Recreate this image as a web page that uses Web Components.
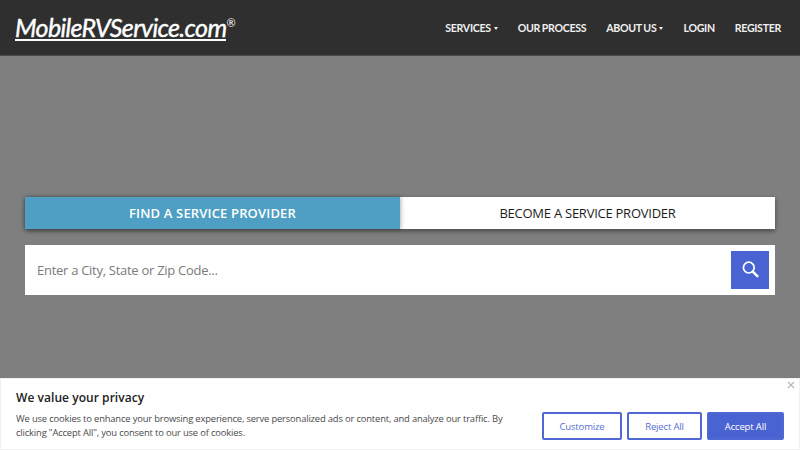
<!DOCTYPE html>
<html lang="en">
<head>
<meta charset="utf-8">
<title>MobileRVService.com</title>
<style>
  html, body { margin: 0; height: 100%; overflow: hidden; background: #7f7f7f; }
  body { font-family: "Open Sans", sans-serif; display: flex; flex-direction: column; }
</style>
</head>
<body>
<site-header></site-header>
<search-hero></search-hero>
<cookie-banner></cookie-banner>
<script>
class SiteHeader extends HTMLElement {
  constructor() {
    super();
    this.attachShadow({ mode: "open" });
    this.shadowRoot.innerHTML = `
      <style>
        :host {
          display: flex;
          flex: none;
          align-items: center;
          justify-content: space-between;
          height: 56px;
          box-sizing: border-box;
          padding: 0 19px 0 15px;
          background: #2f2f2f;
          border-bottom: 1px solid #4a4a4a;
          font-family: Lato, sans-serif;
          color: #fff;
        }
        .logo {
          display: flex;
          align-items: flex-start;
          font-size: 25px;
          font-style: italic;
          font-weight: 400;
          letter-spacing: -0.63px;
          -webkit-text-stroke: 0.4px #fff;
          line-height: 26px;
          margin-top: 1px;
        }
        .name { border-bottom: 2px solid #fff; line-height: 23px; }
        .mark { font-size: 11px; line-height: 12px; font-style: normal; letter-spacing: 0; -webkit-text-stroke: 0; margin-top: 1px; }
        nav { display: flex; gap: 20px; align-items: center; }
        a {
          font-size: 10.6px;
          font-weight: 700;
          letter-spacing: -0.3px;
          word-spacing: -0.5px;
          text-transform: uppercase;
          color: #f0f0f0;
          white-space: nowrap;
        }
        a.drop::after {
          content: "";
          display: inline-block;
          margin-left: 3px;
          vertical-align: 2px;
          border-top: 3px solid #f0f0f0;
          border-left: 2.5px solid transparent;
          border-right: 2.5px solid transparent;
        }
      </style>
      <div class="logo"><span class="name">MobileRVService.com</span><span class="mark">®</span></div>
      <nav>
        <a class="drop">Services</a>
        <a>Our Process</a>
        <a class="drop">About Us</a>
        <a>Login</a>
        <a>Register</a>
      </nav>
    `;
  }
}

class SearchHero extends HTMLElement {
  constructor() {
    super();
    this.attachShadow({ mode: "open" });
    this.shadowRoot.innerHTML = `
      <style>
        :host {
          display: block;
          flex: 1;
          padding: 141px 25px 0;
        }
        .tabs {
          display: grid;
          grid-template-columns: 375px 1fr;
          height: 32px;
          box-shadow: 0 2px 5px rgba(0, 0, 0, 0.45);
          margin-bottom: 16px;
        }
        .tab {
          display: flex;
          align-items: center;
          justify-content: center;
          font-size: 13px;
          font-weight: 400;
          letter-spacing: -0.25px;
          background: #fff;
          color: #1c1c1c;
        }
        .tab.active {
          background: #4e9fc3;
          color: #fff;
          font-weight: 600;
          letter-spacing: 0.16px;
          box-shadow: 1px 0 4px rgba(0, 0, 0, 0.3);
          position: relative;
        }
        .search {
          display: flex;
          align-items: center;
          justify-content: space-between;
          height: 50px;
          box-sizing: border-box;
          padding: 0 6px 0 12px;
          background: #fff;
        }
        .placeholder { font-size: 13px; letter-spacing: -0.28px; color: #7b7b7b; }
        .go {
          display: flex;
          align-items: center;
          justify-content: center;
          width: 38px;
          height: 38px;
          background: #4a63d2;
        }
      </style>
      <div class="tabs">
        <div class="tab active">FIND A SERVICE PROVIDER</div>
        <div class="tab">BECOME A SERVICE PROVIDER</div>
      </div>
      <div class="search">
        <span class="placeholder">Enter a City, State or Zip Code...</span>
        <div class="go">
          <svg width="18" height="18" viewBox="0 0 18 18" fill="none" stroke="#fff">
            <circle cx="7.8" cy="6.6" r="5.4" stroke-width="1.7"/>
            <path d="M11.8 10.6 L16.4 15.2" stroke-width="2.4" stroke-linecap="round"/>
          </svg>
        </div>
      </div>
    `;
  }
}

class CookieBanner extends HTMLElement {
  constructor() {
    super();
    this.attachShadow({ mode: "open" });
    this.shadowRoot.innerHTML = `
      <style>
        :host {
          display: block;
          position: fixed;
          left: 0;
          right: 0;
          bottom: 0;
          height: 72px;
          box-sizing: border-box;
          padding: 11px 15px 0;
          background: #fff;
          border: 1px solid #f0f0f0;
          color: #212121;
        }
        h2 {
          margin: 0 0 6px;
          font-size: 12px;
          line-height: 16px;
          font-weight: 600;
          letter-spacing: 0.05px;
        }
        .row { display: flex; justify-content: space-between; align-items: flex-start; }
        p {
          margin: 0;
          width: 502px;
          font-size: 9.4px;
          line-height: 13.5px;
          letter-spacing: -0.16px;
          color: #4a4a4a;
        }
        .actions { display: flex; gap: 5px; }
        button {
          height: 28px;
          box-sizing: border-box;
          padding: 0;
          font: 400 9.5px "Open Sans", sans-serif;
          letter-spacing: -0.15px;
          border: 2px solid #4f68d4;
          border-radius: 2px;
          background: #fff;
          color: #566ed6;
        }
        .customize { width: 80px; }
        .reject { width: 75px; }
        .accept { width: 77px; background: #4a63d2; color: #fff; }
        .close { position: absolute; top: 2px; right: 4px; }
      </style>
      <svg class="close" width="8" height="8" viewBox="0 0 8 8" stroke="#b5b5b5" stroke-width="1.1">
        <path d="M1 1 L7 7 M7 1 L1 7"/>
      </svg>
      <h2>We value your privacy</h2>
      <div class="row">
        <p>We use cookies to enhance your browsing experience, serve personalized ads or content, and analyze our traffic. By clicking "Accept All", you consent to our use of cookies.</p>
        <div class="actions">
          <button class="customize">Customize</button>
          <button class="reject">Reject All</button>
          <button class="accept">Accept All</button>
        </div>
      </div>
    `;
  }
}

customElements.define("site-header", SiteHeader);
customElements.define("search-hero", SearchHero);
customElements.define("cookie-banner", CookieBanner);
</script>
</body>
</html>
